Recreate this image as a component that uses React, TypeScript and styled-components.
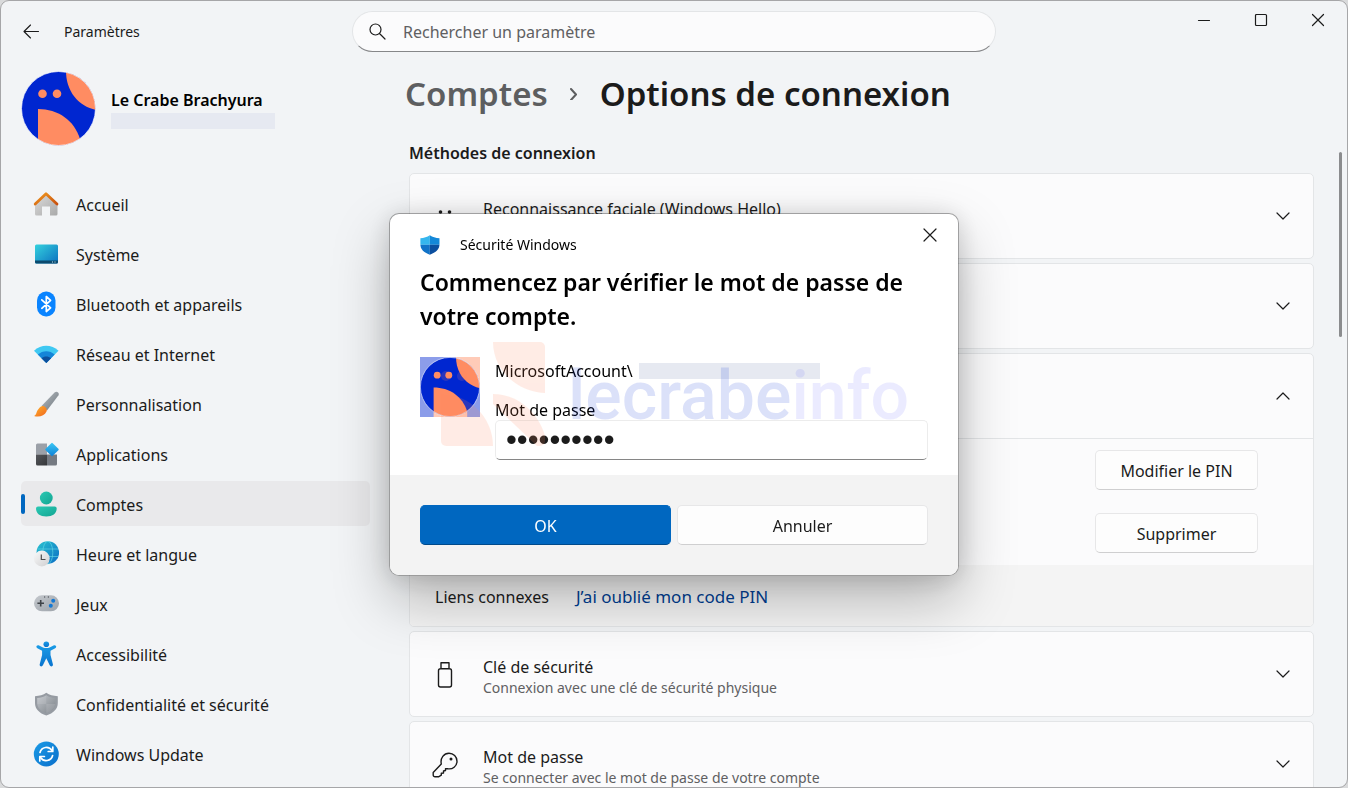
import React, { useId, useState } from "react";
import styled, { createGlobalStyle, css } from "styled-components";

const GlobalStyle = createGlobalStyle`
  *, *::before, *::after { box-sizing: border-box; }
  body {
    margin: 0;
    background: #d9dadb;
    color: #1b1b1b;
    font: 400 16px/24px "Noto Sans", "Open Sans", sans-serif;
  }
  button, input { font: inherit; color: inherit; }
  h1, h2, p { margin: 0; }
`;

/* ---------- window frame ---------- */

const Window = styled.div`
  position: relative;
  display: flex;
  flex-direction: column;
  height: 100vh;
  overflow: hidden;
  background: #f2f4f6;
  border: 1px solid #a6a6a8;
  border-radius: 9px;
`;

const TopBar = styled.header`
  display: grid;
  grid-template-columns: 1fr minmax(0, 644px) 1fr;
  height: 61px;
  flex-shrink: 0;
`;

const TopLeft = styled.div`
  display: flex;
  align-items: center;
  gap: 24px;
  padding-left: 22px;
  font-size: 14px;
`;

const PlainButton = styled.button`
  display: flex;
  align-items: center;
  justify-content: center;
  padding: 0;
  border: 0;
  background: none;
  color: #1b1b1b;
`;

const SearchBox = styled.label`
  display: flex;
  align-items: center;
  gap: 17px;
  height: 41px;
  margin-top: 10px;
  padding: 0 16px;
  background: #fbfbfc;
  border: 1px solid #e3e5e7;
  border-bottom-color: #868789;
  border-radius: 21px;
`;

const SearchInput = styled.input`
  flex: 1;
  min-width: 0;
  padding: 0;
  border: 0;
  outline: 0;
  background: none;
  &::placeholder { color: #5f6062; opacity: 1; }
`;

const WindowControls = styled.div`
  display: flex;
  justify-content: flex-end;
  padding-right: 1px;
`;

const CaptionButton = styled(PlainButton)`
  width: 57px;
  height: 38px;
`;

const Body = styled.div`
  display: flex;
  flex: 1;
  min-height: 0;
`;

/* ---------- sidebar ---------- */

const Sidebar = styled.aside`
  flex: 0 0 369px;
  padding: 9px 0 0 20px;
`;

const Profile = styled.div`
  display: flex;
  align-items: center;
  gap: 15px;
  margin-bottom: 35px;
`;

const ProfileText = styled.div`
  display: flex;
  flex-direction: column;
  gap: 1px;
`;

const ProfileName = styled.span`
  color: #000;
  font-weight: 600;
`;

const Redacted = styled.span<{ $width: number }>`
  display: block;
  width: ${(p) => p.$width}px;
  height: 16px;
  background: #e6e9f1;
`;

const NavList = styled.nav`
  display: flex;
  flex-direction: column;
  gap: 5px;
`;

const NavLink = styled.a<{ $active?: boolean }>`
  position: relative;
  display: flex;
  align-items: center;
  gap: 17px;
  height: 45px;
  padding: 0 12px;
  border-radius: 5px;
  color: #1b1b1b;
  text-decoration: none;
  svg { flex-shrink: 0; }
  ${(p) =>
    p.$active &&
    css`
      background: #e9e9eb;
      &::before {
        content: "";
        position: absolute;
        left: 0;
        top: 13px;
        width: 4px;
        height: 20px;
        border-radius: 2px;
        background: #0067c0;
      }
    `}
`;

const NavLabel = styled.span`
  padding-top: 2px;
`;

/* ---------- main column ---------- */

const Main = styled.main`
  flex: 1;
  min-width: 0;
  padding: 10px 33px 0 39px;
`;

const Breadcrumb = styled.h1`
  display: flex;
  align-items: center;
  gap: 20px;
  margin: 0 0 25px -4px;
  font-size: 33px;
  line-height: 44px;
  font-weight: 600;
`;

const CrumbLink = styled.a`
  color: #5d5e60;
  text-decoration: none;
`;

const CrumbMark = styled.span`
  display: flex;
  color: #5d5e60;
`;

const SectionTitle = styled.h2`
  margin-bottom: 8px;
  font-size: 16px;
  line-height: 24px;
  font-weight: 600;
`;

const CardList = styled.div`
  display: flex;
  flex-direction: column;
  gap: 4px;
`;

const Card = styled.section`
  background: #fbfbfc;
  border: 1px solid #e3e5e7;
  border-radius: 5px;
  overflow: hidden;
`;

const CardHeader = styled.button`
  display: flex;
  align-items: center;
  gap: 25px;
  width: 100%;
  height: 84px;
  padding: 0 23px 0 22px;
  border: 0;
  background: none;
  text-align: left;
`;

const IconSlot = styled.span`
  display: flex;
  flex: 0 0 26px;
  padding-top: 2px;
`;

const CardText = styled.span`
  display: flex;
  flex: 1;
  min-width: 0;
  flex-direction: column;
  padding-top: 6px;
`;

const CardTitle = styled.span`
  line-height: 21px;
`;

const CardNote = styled.span`
  color: #5f6062;
  font-size: 14px;
  line-height: 20px;
`;

const CardActions = styled.div`
  display: flex;
  flex-direction: column;
  align-items: flex-end;
  gap: 23px;
  padding: 11px 55px 12px;
  border-top: 1px solid #e3e5e7;
`;

const CardFooter = styled.div`
  display: flex;
  align-items: center;
  gap: 27px;
  height: 61px;
  padding: 2px 25px 0;
  background: #f4f4f4;
`;

const TextLink = styled.a`
  color: #003e92;
  font-size: 17px;
  text-decoration: none;
`;

const Button = styled.button<{ $primary?: boolean; $width?: number }>`
  flex: ${(p) => (p.$width ? "none" : "1")};
  width: ${(p) => (p.$width ? `${p.$width}px` : "auto")};
  height: 40px;
  padding: 2px 12px 0;
  border: 1px solid ${(p) => (p.$primary ? "#0067c0" : "#e7e7e8")};
  border-bottom-color: ${(p) => (p.$primary ? "#004a8b" : "#cfcfd0")};
  border-radius: 5px;
  background: ${(p) => (p.$primary ? "#0067c0" : "#fdfdfd")};
  color: ${(p) => (p.$primary ? "#fff" : "#1b1b1b")};
`;

const ScrollThumb = styled.div`
  position: absolute;
  top: 151px;
  right: 5px;
  width: 3px;
  height: 185px;
  border-radius: 2px;
  background: #8b8c8e;
`;

/* ---------- dialog ---------- */

const Overlay = styled.div`
  position: fixed;
  inset: 0;
  display: flex;
  align-items: center;
  justify-content: center;
  padding-top: 1px;
`;

const Dialog = styled.div`
  position: relative;
  width: 570px;
  max-width: 100%;
  overflow: hidden;
  background: #fff;
  background-clip: padding-box;
  border: 1px solid rgba(0, 0, 0, 0.36);
  border-radius: 10px;
  color: #000;
`;

const DialogShadow = styled.div`
  border-radius: 10px;
  box-shadow: 0 24px 56px rgba(0, 0, 0, 0.26), 0 2px 24px rgba(0, 0, 0, 0.14);
`;

const DialogBar = styled.div`
  display: flex;
  justify-content: space-between;
  height: 40px;
`;

const DialogClose = styled(PlainButton)`
  width: 56px;
  height: 41px;
`;

const DialogBrand = styled.div`
  display: flex;
  align-items: center;
  gap: 20px;
  padding: 21px 0 0 30px;
  font-size: 14px;
  line-height: 20px;
`;

const DialogBody = styled.div`
  padding: 11px 30px 15px;
`;

const DialogHeading = styled.h2`
  font-size: 23px;
  line-height: 34px;
  font-weight: 600;
  margin-bottom: 24px;
`;

const Credentials = styled.div`
  display: flex;
  align-items: flex-start;
  gap: 15px;
`;

const CredentialFields = styled.div`
  display: flex;
  flex: 1;
  min-width: 0;
  flex-direction: column;
`;

const AccountLine = styled.div`
  display: flex;
  align-items: center;
  gap: 6px;
  height: 28px;
  margin-bottom: 15px;
`;

const FieldLabel = styled.label`
  line-height: 20px;
`;

const PasswordInput = styled.input`
  width: 100%;
  height: 40px;
  padding: 0 10px;
  border: 1px solid #ececec;
  border-bottom-color: #868686;
  border-radius: 5px;
  outline: 0;
  background: #fff;
  color: #1b1b1b;
  font-family: "Liberation Sans", sans-serif;
  font-size: 31px;
`;

const DialogFooter = styled.div`
  display: flex;
  gap: 6px;
  padding: 30px;
  background: #f3f3f3;
`;

const Watermark = styled.div`
  position: absolute;
  left: 51px;
  top: 128px;
  display: flex;
  align-items: flex-start;
  gap: 23px;
  pointer-events: none;
`;

const Wordmark = styled.span<{ $light?: boolean }>`
  color: ${(p) => (p.$light ? "rgba(70, 70, 255, 0.11)" : "rgba(0, 40, 210, 0.14)")};
`;

const WatermarkText = styled.div`
  padding-top: 14px;
  font: 500 68px/80px Roboto, sans-serif;
`;

/* ---------- drawings ---------- */

function AvatarArt() {
  return (
    <>
      <rect width="75" height="75" fill="#0026d0" />
      <path d="M45 0C45 20 57 35 75 39V0Z" fill="#ff8c62" />
      <path d="M17 38C37 38 53 49 59 68V75H17Z" fill="#ff8c62" />
      <circle cx="21.5" cy="22.7" r="4.3" fill="#ff8c62" />
      <circle cx="36" cy="22.7" r="4.3" fill="#ff8c62" />
    </>
  );
}

function Avatar({ size, square }: { size: number; square?: boolean }) {
  const id = useId();
  return (
    <svg width={size} height={size} viewBox="0 0 75 75" aria-hidden="true">
      <clipPath id={id}>
        <circle cx="37.5" cy="37.5" r="37" />
      </clipPath>
      {square && (
        <g opacity="0.45">
          <AvatarArt />
        </g>
      )}
      <g clipPath={`url(#${id})`}>
        <AvatarArt />
      </g>
      <circle cx="37.5" cy="37.5" r="37" fill="none" stroke="#fff" strokeWidth="1" opacity="0.7" />
    </svg>
  );
}

const Nav = ({ children }: { children: React.ReactNode }) => (
  <svg width="26" height="26" viewBox="0 0 26 26" fill="none" aria-hidden="true">
    {children}
  </svg>
);

const Grad = ({ id, from, to, x2 = 1 }: { id: string; from: string; to: string; x2?: number }) => (
  <linearGradient id={id} x1="0" y1="0" x2={x2} y2="1">
    <stop offset="0" stopColor={from} />
    <stop offset="1" stopColor={to} />
  </linearGradient>
);

const HomeIcon = () => (
  <Nav>
    <Grad id="homeBody" from="#dcdcdc" to="#a9a9a9" />
    <Grad id="homeRoof" from="#f09a20" to="#c9500e" />
    <path d="M2 12.5 13 2.5 24.5 12.5V23a1.5 1.5 0 0 1-1.5 1.5H17V15.5H9V24.5H3.5A1.5 1.5 0 0 1 2 23Z" fill="url(#homeBody)" />
    <path d="M2.200 13 13 2.700 24 13" stroke="url(#homeRoof)" strokeWidth="2.800" strokeLinecap="round" strokeLinejoin="round" />
  </Nav>
);

const SystemIcon = () => (
  <Nav>
    <Grad id="sysScreen" from="#35d3de" to="#0b6fc0" />
    <clipPath id="sysClip"><rect x="2" y="3.5" width="23" height="19" rx="1.5" /></clipPath>
    <g clipPath="url(#sysClip)">
      <rect x="2" y="3" width="23" height="20" fill="url(#sysScreen)" />
      <rect x="2" y="19.5" width="23" height="3.5" fill="#0c4a6e" />
      <path d="M19 21h1M21.5 21h1" stroke="#bfe6f5" />
    </g>
  </Nav>
);

const BluetoothIcon = () => (
  <Nav>
    <rect x="4" y="0.5" width="18.5" height="25" rx="9" fill="#0a84ff" />
    <path d="M8.800 8.800 17.600 16.800 13.300 20.500V5.500L17.600 9.300 8.800 17.300" stroke="#fff" strokeWidth="1.700" strokeLinejoin="round" strokeLinecap="round" />
  </Nav>
);

const WifiIcon = () => (
  <Nav>
    <path d="M1 9.800C8 3 18.500 3 25.500 9.800L13.300 22Z" fill="#3fc8f2" />
    <path d="M4.800 13.600C9.800 9 16.800 9 21.700 13.600L13.300 22Z" fill="#1585d8" />
    <path d="M8.500 17.300C11.300 14.800 15.200 14.800 18.100 17.300L13.300 22Z" fill="#0c4f9c" />
  </Nav>
);

const BrushIcon = () => (
  <Nav>
    <Grad id="brushHandle" from="#b9bfc4" to="#6d757c" />
    <Grad id="brushTip" from="#ffb42c" to="#f0661e" />
    <path d="M8.500 15 21.800 1.200C23.800-.4 26.800 1.700 25.500 4.200L14 19.500Z" fill="url(#brushHandle)" />
    <path d="M1 25C4 24 3 20.500 5.500 18 7 15.500 9 14.500 10.500 15 12.800 15.800 14.500 18 13.500 20.500 11.500 25 6 26.400 1 25Z" fill="url(#brushTip)" />
  </Nav>
);

const AppsIcon = () => (
  <Nav>
    <Grad id="appsDiamond" from="#3cc9f5" to="#0c7fd6" />
    <Grad id="appsDark" from="#55575b" to="#35373a" />
    <path d="M3 4a1.5 1.5 0 0 1 1.5-1.5H14V13.5H3Z" fill="#9ba0a8" />
    <path d="M3 13.5H14V24.5H4.5A1.5 1.5 0 0 1 3 23Z" fill="url(#appsDark)" />
    <path d="M14 13.5H24V23a1.5 1.5 0 0 1-1.5 1.5H14Z" fill="#757a82" />
    <rect x="14" y="3.5" width="10" height="10" rx="1" transform="rotate(45 19 8.5)" fill="url(#appsDiamond)" />
  </Nav>
);

const AccountIcon = () => (
  <Nav>
    <Grad id="acc" from="#2cc9b4" to="#12a592" />
    <circle cx="13.3" cy="7" r="6.4" fill="url(#acc)" />
    <path d="M5 15.5H21.700A2 2 0 0 1 23.700 17.500C23.700 22.500 19.500 25.500 13.300 25.500S3 22.500 3 17.500A2 2 0 0 1 5 15.500Z" fill="url(#acc)" />
  </Nav>
);

const TimeIcon = () => (
  <Nav>
    <Grad id="globe" from="#29c3d0" to="#0b6cc4" />
    <Grad id="clock" from="#fafafa" to="#cfcfd1" />
    <circle cx="14.8" cy="11.6" r="11.3" fill="url(#globe)" />
    <ellipse cx="14.8" cy="11.6" rx="5" ry="11.3" stroke="#6be0ea" strokeWidth="0.7" opacity="0.8" />
    <path d="M4.500 8H25.300M4.500 15.500H25.300" stroke="#6be0ea" strokeWidth="0.7" opacity="0.8" />
    <circle cx="8.8" cy="17.5" r="7.9" fill="url(#clock)" />
    <path d="M8.300 13.500V18.500H12.500" stroke="#4b4b4d" strokeWidth="1.200" />
  </Nav>
);

const GamesIcon = () => (
  <Nav>
    <Grad id="pad" from="#c4c8cd" to="#9da3aa" />
    <rect x="1" y="4.3" width="25" height="16" rx="8" fill="url(#pad)" />
    <path d="M7.700 9V15.500M4.400 12.200H11" stroke="#3f4348" strokeWidth="1.600" />
    <circle cx="20.2" cy="9.8" r="2" fill="#1378d4" />
    <circle cx="17.8" cy="14.7" r="2" fill="#1378d4" />
    <path d="M11 6h1.200M14.800 6H16" stroke="#3f4348" strokeWidth="1.200" />
  </Nav>
);

const AccessibilityIcon = () => (
  <Nav>
    <Grad id="a11y" from="#1a9be6" to="#0a74cf" x2={0} />
    <circle cx="13.3" cy="3.2" r="2.8" fill="url(#a11y)" />
    <path d="M5.600 4.300 10 6.400C12 7.300 14.600 7.300 16.600 6.400L21 4.300C23 3.600 24.200 6.200 22.200 7.300L17.500 9.700V14L19.900 23.300C20.300 25.500 17.500 26.200 16.700 24.300L13.300 17.200 9.900 24.300C9 26.200 6.300 25.500 6.700 23.300L9.100 14V9.700L4.400 7.300C2.400 6.200 3.600 3.600 5.600 4.300Z" fill="url(#a11y)" />
  </Nav>
);

const ShieldShape = "M13.300 1.800C16.500 4 20 5 24.800 5.200V12C24.800 18 20.500 22 13.300 24.600 6.200 22 2 18 2 12V5.200C6.500 5 10.200 4 13.300 1.800Z";

const PrivacyIcon = () => (
  <Nav>
    <Grad id="privacy" from="#c2c6cb" to="#7c8288" />
    <path d={ShieldShape} fill="#969ba2" />
    <path d="M13.300 4.200C16 6 19 6.800 22.500 7V12C22.500 16.800 19.200 19.800 13.300 22.200 7.500 19.800 4.200 16.800 4.200 12V7C7.600 6.800 10.500 6 13.300 4.200Z" fill="url(#privacy)" />
    <path d="M13.300 4.200V13H4.200V7C7.600 6.800 10.500 6 13.300 4.200ZM13.300 22.200V13H22.300C21.600 17.200 18.500 20 13.300 22.200Z" fill="#d5d8dc" opacity="0.2" />
  </Nav>
);

const UpdateIcon = () => (
  <Nav>
    <Grad id="upd" from="#1b9be6" to="#0a6fcb" />
    <circle cx="13.3" cy="13" r="12.5" fill="url(#upd)" />
    <path d="M7 11.500A6.600 6.600 0 0 1 19 9.500M19.600 14.500A6.600 6.600 0 0 1 7.600 16.500" stroke="#fff" strokeWidth="1.700" strokeLinecap="round" />
    <path d="M19.800 6V10.500H15.200M6.800 20V15.500H11.400" stroke="#fff" strokeWidth="1.700" strokeLinecap="round" strokeLinejoin="round" />
  </Nav>
);

const DefenderShield = () => (
  <svg width="20" height="20" viewBox="2 1.5 23 23.5" aria-hidden="true">
    <clipPath id="defClip"><path d={ShieldShape} /></clipPath>
    <g clipPath="url(#defClip)">
      <rect width="13.3" height="13" fill="#35b6ee" />
      <rect x="13.3" width="13" height="13" fill="#1488d8" />
      <rect y="13" width="13.3" height="13" fill="#1173c8" />
      <rect x="13.3" y="13" width="13" height="13" fill="#0b4f9f" />
    </g>
  </svg>
);

const Line = ({ size, d, width = 1.2 }: { size: number; d: string; width?: number }) => (
  <svg width={size} height={size} viewBox={`0 0 ${size} ${size}`} fill="none" stroke="currentColor" strokeWidth={width} strokeLinecap="round" strokeLinejoin="round" aria-hidden="true">
    <path d={d} />
  </svg>
);

const Chevron = ({ up }: { up?: boolean }) => (
  <Line size={14} d={up ? "M1 10 7 4 13 10" : "M1 4 7 10 13 4"} />
);

const FaceIcon = () => (
  <svg width="26" height="26" viewBox="0 0 26 26" fill="none" stroke="#1b1b1b" strokeWidth="1.5" strokeLinecap="round" aria-hidden="true">
    <circle cx="8.5" cy="8" r="1.8" fill="#1b1b1b" stroke="none" />
    <circle cx="17.5" cy="8" r="1.8" fill="#1b1b1b" stroke="none" />
    <path d="M6 17C9 21 17 21 20 17" />
  </svg>
);

const UsbIcon = () => (
  <Line size={26} width={1.4} d="M8.500 6.700H17.500A2 2 0 0 1 19.500 8.700V23A2 2 0 0 1 17.500 25H8.500A2 2 0 0 1 6.500 23V8.700A2 2 0 0 1 8.500 6.700ZM9 6.500V.800H17V6.500" />
);

const KeyIcon = () => (
  <svg width="26" height="26" viewBox="0 0 26 26" fill="none" stroke="#1b1b1b" strokeWidth="1.4" strokeLinejoin="round" aria-hidden="true">
    <path d="M17 1.200A8 8 0 0 1 25 9.200C25 14.200 20.500 17.700 15.500 16.700L13.500 16.700V18.500L11.500 19V21L9.300 21.300V23.200L6.500 24.800H3A1.800 1.800 0 0 1 1.200 23V20.500L9.300 12C8 6 12 1.200 17 1.200Z" />
    <circle cx="19" cy="7" r="1.5" fill="#1b1b1b" stroke="none" />
  </svg>
);

/* ---------- page ---------- */

const navItems: [string, () => React.ReactElement][] = [
  ["Accueil", HomeIcon],
  ["Système", SystemIcon],
  ["Bluetooth et appareils", BluetoothIcon],
  ["Réseau et Internet", WifiIcon],
  ["Personnalisation", BrushIcon],
  ["Applications", AppsIcon],
  ["Comptes", AccountIcon],
  ["Heure et langue", TimeIcon],
  ["Jeux", GamesIcon],
  ["Accessibilité", AccessibilityIcon],
  ["Confidentialité et sécurité", PrivacyIcon],
  ["Windows Update", UpdateIcon],
];

type OptionProps = {
  icon?: React.ReactNode;
  title?: string;
  note?: string;
  open?: boolean;
  children?: React.ReactNode;
};

function OptionCard({ icon, title, note, open, children }: OptionProps) {
  return (
    <Card>
      <CardHeader type="button" aria-expanded={!!open} aria-label={title ? undefined : "Option"}>
        <IconSlot>{icon}</IconSlot>
        <CardText>
          <CardTitle>{title}</CardTitle>
          <CardNote>{note ?? "\u00a0"}</CardNote>
        </CardText>
        <Chevron up={open} />
      </CardHeader>
      {children}
    </Card>
  );
}

function SecurityDialog() {
  const [password, setPassword] = useState("0123456789");
  return (
    <Overlay>
      <DialogShadow>
        <Dialog role="dialog" aria-modal="true" aria-labelledby="dialog-heading">
          <DialogBar>
            <DialogBrand>
              <DefenderShield />
              Sécurité Windows
            </DialogBrand>
            <DialogClose type="button" aria-label="Fermer">
              <Line size={14} d="M1 1 13 13M13 1 1 13" />
            </DialogClose>
          </DialogBar>
          <DialogBody>
            <DialogHeading id="dialog-heading">
              Commencez par vérifier le mot de passe de votre compte.
            </DialogHeading>
            <Credentials>
              <Avatar size={60} square />
              <CredentialFields>
                <AccountLine>
                  MicrosoftAccount\
                  <Redacted $width={181} />
                </AccountLine>
                <FieldLabel htmlFor="password">Mot de passe</FieldLabel>
                <PasswordInput
                  id="password"
                  type="password"
                  value={password}
                  onChange={(e) => setPassword(e.target.value)}
                />
              </CredentialFields>
            </Credentials>
          </DialogBody>
          <DialogFooter>
            <Button type="button" $primary>OK</Button>
            <Button type="button">Annuler</Button>
          </DialogFooter>
          <Watermark>
            <svg width="104" height="104" viewBox="0 0 104 104" fill="#ff8b61" opacity="0.16" aria-hidden="true">
              <path d="M52 0H99A5 5 0 0 1 104 5V51C76 50 52 28 52 0Z" />
              <path d="M52 52C78 52 98 72 104 94V99A5 5 0 0 1 99 104H96L52 62Z" />
              <path d="M0 52C28 52 52 75 52 104H5A5 5 0 0 1 0 99Z" />
              <circle cx="5" cy="34" r="5" />
              <circle cx="21" cy="34" r="5" />
            </svg>
            <WatermarkText>
              <Wordmark>lecrabe</Wordmark>
              <Wordmark $light>info</Wordmark>
            </WatermarkText>
          </Watermark>
        </Dialog>
      </DialogShadow>
    </Overlay>
  );
}

export default function App() {
  return (
    <>
      <GlobalStyle />
      <Window>
        <TopBar>
          <TopLeft>
            <PlainButton type="button" aria-label="Retour">
              <Line size={17} width={1.1} d="M7.500 2 1 8.500 7.500 15M1 8.500H15.500" />
            </PlainButton>
            Paramètres
          </TopLeft>
          <SearchBox>
            <Line size={17} d="M12 6.500A5.500 5.500 0 1 1 1 6.500 5.500 5.500 0 0 1 12 6.500ZM10.500 10.500 16 16" />
            <SearchInput type="search" placeholder="Rechercher un paramètre" aria-label="Rechercher un paramètre" />
          </SearchBox>
          <WindowControls>
            <CaptionButton type="button" aria-label="Réduire">
              <Line size={14} d="M1.500 7.500H12.500" />
            </CaptionButton>
            <CaptionButton type="button" aria-label="Agrandir">
              <Line size={14} d="M2.500 1.500H11.500A1 1 0 0 1 12.500 2.500V11.500A1 1 0 0 1 11.500 12.500H2.500A1 1 0 0 1 1.500 11.500V2.500A1 1 0 0 1 2.500 1.500Z" />
            </CaptionButton>
            <CaptionButton type="button" aria-label="Fermer">
              <Line size={14} d="M1.500 1.500 12.500 12.500M12.500 1.500 1.500 12.500" />
            </CaptionButton>
          </WindowControls>
        </TopBar>
        <Body>
          <Sidebar>
            <Profile>
              <Avatar size={75} />
              <ProfileText>
                <ProfileName>Le Crabe Brachyura</ProfileName>
                <Redacted $width={164} />
              </ProfileText>
            </Profile>
            <NavList>
              {navItems.map(([label, Icon]) => (
                <NavLink key={label} href="#" $active={label === "Comptes"} aria-current={label === "Comptes" ? "page" : undefined}>
                  <Icon />
                  <NavLabel>{label}</NavLabel>
                </NavLink>
              ))}
            </NavList>
          </Sidebar>
          <Main>
            <Breadcrumb>
              <CrumbLink href="#">Comptes</CrumbLink>
              <CrumbMark>
                <Line size={12} width={2} d="M3 1 8 6.500 3 12" />
              </CrumbMark>
              Options de connexion
            </Breadcrumb>
            <SectionTitle>Méthodes de connexion</SectionTitle>
            <CardList>
              <OptionCard icon={<FaceIcon />} title="Reconnaissance faciale (Windows Hello)" />
              <OptionCard />
              <OptionCard open>
                <CardActions>
                  <Button type="button" $width={163}>Modifier le PIN</Button>
                  <Button type="button" $width={163}>Supprimer</Button>
                </CardActions>
                <CardFooter>
                  Liens connexes
                  <TextLink href="#">J’ai oublié mon code PIN</TextLink>
                </CardFooter>
              </OptionCard>
              <OptionCard icon={<UsbIcon />} title="Clé de sécurité" note="Connexion avec une clé de sécurité physique" />
              <OptionCard icon={<KeyIcon />} title="Mot de passe" note="Se connecter avec le mot de passe de votre compte" />
            </CardList>
          </Main>
        </Body>
        <ScrollThumb />
      </Window>
      <SecurityDialog />
    </>
  );
}
